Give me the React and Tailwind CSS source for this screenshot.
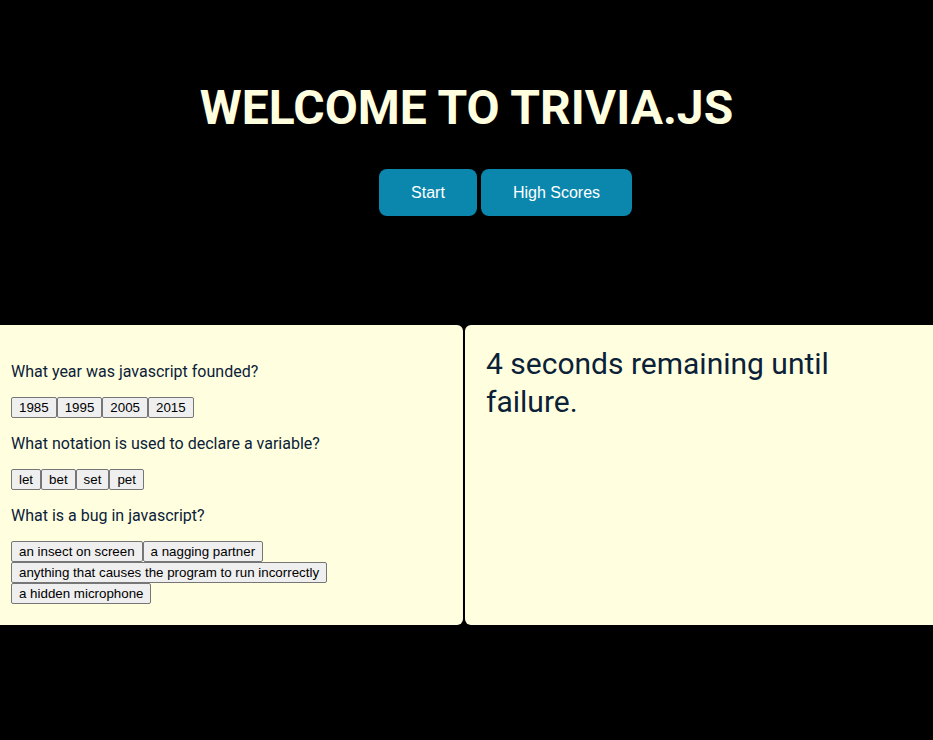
const QUESTIONS = [
  { q: "What year was javascript founded?", answers: ["1985", "1995", "2005", "2015"] },
  { q: "What notation is used to declare a variable?", answers: ["let", "bet", "set", "pet"] },
  {
    q: "What is a bug in javascript?",
    answers: [
      "an insect on screen",
      "a nagging partner",
      "anything that causes the program to run incorrectly",
      "a hidden microphone",
    ],
  },
];

export default function App() {
  return (
    <div className="min-h-[740px] w-full overflow-hidden bg-black font-['Roboto',sans-serif]">
      <header className="pt-[78px] text-center">
        <h1 className="text-[48px] font-bold leading-[60px] text-[#ffffe0]">WELCOME TO TRIVIA.JS</h1>
        <div className="mt-[31px] flex justify-center gap-1 pl-[78px] font-['Liberation_Sans',Arial,sans-serif]">
          <button className="h-[47px] w-[98px] rounded-lg bg-[#0b87ae] text-[16px] text-white">Start</button>
          <button className="h-[47px] w-[151px] rounded-lg bg-[#0b87ae] text-[16px] text-white">High Scores</button>
        </div>
      </header>

      <main className="mt-[109px] flex gap-[2px]">
        <section className="h-[300px] w-[463px] shrink-0 rounded-r-[6px] bg-[#ffffe0] px-[11px] pt-[21px] pb-[21px] text-[#0b2138] shadow-[1px_0_2px_rgba(0,0,0,0.35)]">
          {QUESTIONS.map((item) => (
            <div key={item.q}>
              <p className="my-4 text-[16px] leading-[19px]">{item.q}</p>
              <div className="flex flex-wrap font-['Liberation_Sans',Arial,sans-serif]">
                {item.answers.map((a) => (
                  <button
                    key={a}
                    className="h-[21px] rounded-[2px] border border-[#767676] bg-[#efefef] px-[7px] text-[13.33px] leading-[19px] text-black"
                  >
                    {a}
                  </button>
                ))}
              </div>
            </div>
          ))}
        </section>
        <section className="h-[300px] w-[480px] shrink-0 rounded-[6px] bg-[#ffffe0] px-[21px] pt-[20px] text-[#0b2138] shadow-[-1px_0_2px_rgba(0,0,0,0.35)]">
          <p className="w-[400px] text-[30px] leading-[38px]">4 seconds remaining until failure.</p>
        </section>
      </main>
    </div>
  );
}
